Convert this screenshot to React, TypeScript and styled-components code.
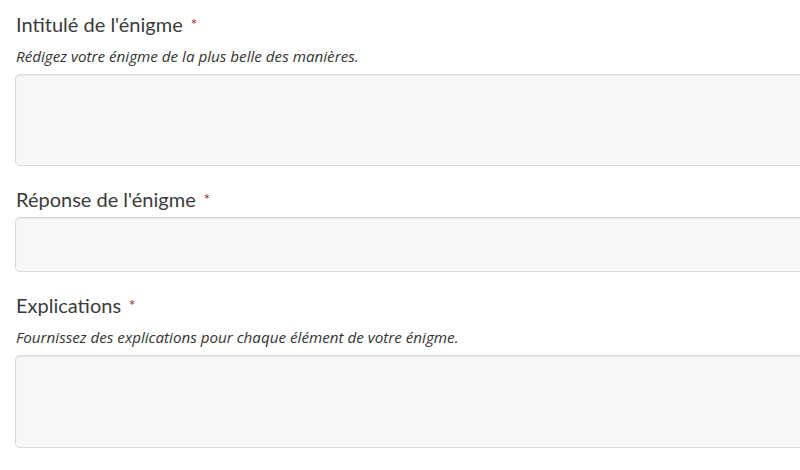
import React from "react";
import styled, { createGlobalStyle } from "styled-components";

const GlobalStyle = createGlobalStyle`
  html, body {
    margin: 0;
    padding: 0;
    background: #ffffff;
    overflow: hidden;
  }
  body {
    font-family: "Lato", "Liberation Sans", sans-serif;
    color: #3b3b3b;
  }
`;

const Form = styled.form`
  width: 840px;
  padding: 10px 0 0 15px;
  display: flex;
  flex-direction: column;
`;

const Field = styled.div`
  display: flex;
  flex-direction: column;
  margin-bottom: 19px;
`;

const Label = styled.label`
  font-size: 20px;
  line-height: 28px;
  color: #3b3b3b;
  padding-left: 1px;
  margin-bottom: 4px;
`;

const Required = styled.span`
  color: #a3242f;
  font-size: 15px;
  margin-left: 8px;
  vertical-align: 2px;
`;

const Hint = styled.p`
  margin: 4px 0 8px 1px;
  font-family: "Open Sans", "Liberation Sans", sans-serif;
  font-size: 15.2px;
  line-height: 20px;
  font-style: italic;
  color: #333333;
`;

const Input = styled.textarea<{ $height: number }>`
  display: block;
  box-sizing: border-box;
  width: 100%;
  height: ${(p) => p.$height}px;
  resize: none;
  background: #f7f7f7;
  border: 1px solid #dadada;
  border-radius: 5px;
  box-shadow: inset 0 1px 2px rgba(0, 0, 0, 0.06);
  font-family: inherit;
  outline: none;
`;

export default function App() {
  return (
    <>
      <GlobalStyle />
      <Form>
        <Field>
          <Label>
            Intitulé de l'énigme<Required>*</Required>
          </Label>
          <Hint>Rédigez votre énigme de la plus belle des manières.</Hint>
          <Input $height={92} />
        </Field>
        <Field>
          <Label>
            Réponse de l'énigme<Required>*</Required>
          </Label>
          <Input $height={55} />
        </Field>
        <Field>
          <Label>
            Explications<Required>*</Required>
          </Label>
          <Hint>Fournissez des explications pour chaque élément de votre énigme.</Hint>
          <Input $height={93} />
        </Field>
      </Form>
    </>
  );
}
